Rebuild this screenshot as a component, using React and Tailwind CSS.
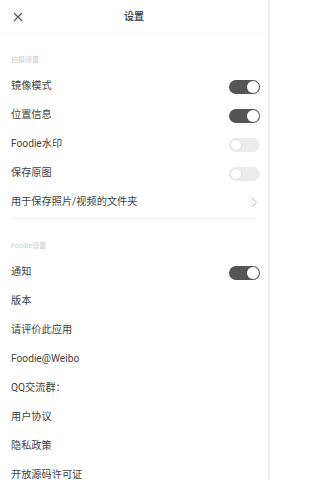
import React from "react";

const Toggle = ({ on }) => (
  <div
    className={`w-[31px] h-[14px] rounded-full flex items-center px-[1px] ${
      on ? "bg-[#555555] justify-end" : "bg-[#ececec] justify-start"
    }`}
  >
    <div
      className={`w-[12px] h-[12px] rounded-full bg-white ${
        on ? "" : "border border-[#e0e0e0]"
      }`}
    />
  </div>
);

const Row = ({ label, right }) => (
  <div className="h-[29px] flex items-center justify-between pl-[11px] pr-[8px]">
    <span className="text-[10.2px] text-[#3f3f3f] leading-none">{label}</span>
    {right}
  </div>
);

const SectionTitle = ({ children }) => (
  <div className="h-[39px] flex items-end pb-[7px] pl-[11px]">
    <span className="text-[7px] leading-[10px] text-[#cccccc]">{children}</span>
  </div>
);

const Chevron = () => (
  <svg width="7" height="11" viewBox="0 0 7 11" className="mr-[2px]">
    <path d="M1 1l4.5 4.5L1 10" fill="none" stroke="#bdbdbd" strokeWidth="1" />
  </svg>
);

const App = () => {
  return (
    <div
      className="w-[270px] h-[480px] overflow-hidden bg-white border-r-2 border-[#eeeeee]"
      style={{ fontFamily: '"Roboto", "Noto Sans CJK SC", sans-serif' }}
    >
      {/* 顶栏 */}
      <header className="h-[33px] relative flex items-center justify-center shadow-[0_1px_1px_rgba(0,0,0,0.03)]">
        <svg
          width="10"
          height="10"
          viewBox="0 0 10 10"
          className="absolute left-[13px] top-[12px]"
        >
          <path d="M1 1l8 8M9 1L1 9" stroke="#555555" strokeWidth="1.1" />
        </svg>
        <span className="text-[10px] font-medium text-[#333333]">设置</span>
      </header>

      {/* 拍摄设置 */}
      <SectionTitle>拍摄设置</SectionTitle>
      <Row label="镜像模式" right={<Toggle on />} />
      <Row label="位置信息" right={<Toggle on />} />
      <Row label="Foodie水印" right={<Toggle />} />
      <Row label="保存原图" right={<Toggle />} />
      <Row label="用于保存照片/视频的文件夹" right={<Chevron />} />
      <div className="mt-[1px] mx-[11px] h-px bg-[#f3f3f3]" />

      {/* Foodie设置 */}
      <SectionTitle>Foodie设置</SectionTitle>
      <Row label="通知" right={<Toggle on />} />
      <Row label="版本" />
      <Row label="请评价此应用" />
      <Row label="Foodie@Weibo" />
      <Row label="QQ交流群：" />
      <Row label="用户协议" />
      <Row label="隐私政策" />
      <Row label="开放源码许可证" />
    </div>
  );
};

export default App;
